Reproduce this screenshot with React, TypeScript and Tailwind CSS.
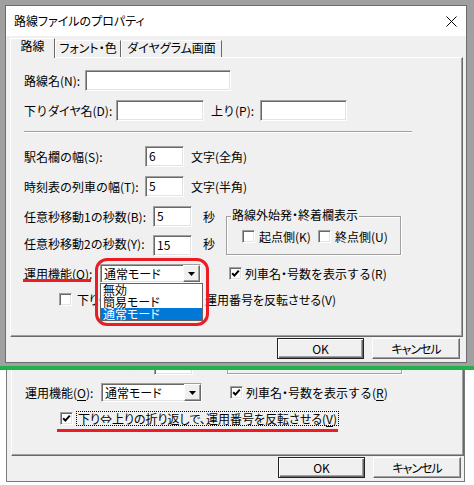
import React from "react";

const SUNKEN =
  "border border-t-[#a0a0a0] border-l-[#a0a0a0] border-r-white border-b-white shadow-[inset_1px_1px_0_#696969,inset_-1px_-1px_0_#e3e3e3] bg-white";
const RAISED =
  "border border-t-white border-l-white border-r-[#696969] border-b-[#696969] shadow-[inset_-1px_-1px_0_#a0a0a0] bg-[#f0f0f0]";

function K({ children }: { children: React.ReactNode }) {
  return <span className="[font-feature-settings:'palt']">{children}</span>;
}

function Check({ checked, className = "" }: { checked?: boolean; className?: string }) {
  return (
    <div className={`w-[13px] h-[13px] shrink-0 flex items-center justify-center ${SUNKEN} ${className}`}>
      {checked && (
        <svg width="9" height="9" viewBox="0 0 9 9">
          <polyline points="1.2,4.2 3.4,6.6 7.8,1.6" fill="none" stroke="#000" strokeWidth="2" />
        </svg>
      )}
    </div>
  );
}

function Field({ w, value }: { w: string; value?: string }) {
  return (
    <div className={`${w} h-[21px] shrink-0 pl-[3px] pt-[2px] leading-[14px] ${SUNKEN}`}>{value}</div>
  );
}

function Body({ bottom }: { bottom?: boolean }) {
  const u = bottom ? "underline underline-offset-[2px]" : "";
  return (
    <div className="w-[460px] h-[326px] shrink-0 bg-[#f0f0f0] pl-[4px] pr-[3px] pt-[2px] flex flex-col">
      {/* tabs */}
      <div className="flex items-end h-[19px] shrink-0">
        <div className="relative z-10 h-[20px] -mb-[1px] w-[45px] shrink-0 border-l border-t border-r border-l-white border-t-white border-r-[#696969] bg-[#f0f0f0] flex justify-center leading-[14px]">
          路線
        </div>
        <div className="h-[17px] w-[66px] shrink-0 border-l border-t border-r border-l-white border-t-white border-r-[#696969] flex justify-center leading-[14px] whitespace-nowrap">
          <K>フォント・色</K>
        </div>
        <div className="h-[17px] w-[101px] shrink-0 border-l border-t border-r border-l-white border-t-white border-r-[#696969] flex justify-center leading-[14px] whitespace-nowrap">
          <K>ダイヤグラム</K>画面
        </div>
      </div>

      {/* panel */}
      <div className="h-[280px] shrink-0 border border-t-white border-l-white border-r-[#696969] border-b-[#696969] shadow-[inset_-1px_-1px_0_#a0a0a0] pl-[13px] pt-[12px] leading-[14px] whitespace-nowrap">
        <div className="flex items-center h-[21px]">
          <span className="w-[61px] shrink-0">路線名(N):</span>
          <Field w="w-[146px]" />
        </div>
        <div className="flex items-center h-[21px] mt-[9px]">
          <span className="w-[92px] shrink-0">
            下り<K>ダイヤ</K>名(D):
          </span>
          <Field w="w-[88px]" />
          <span className="ml-[7px] w-[49px] shrink-0">上り(P):</span>
          <Field w="w-[87px]" />
        </div>
        <div className="mt-[10px] w-[388px] h-[2px] border-t border-t-[#a0a0a0] border-b border-b-white" />
        <div className="flex items-center h-[21px] mt-[13px]">
          <span className="w-[121px] shrink-0">駅名欄の幅(S):</span>
          <Field w="w-[39px]" value="6" />
          <span className="ml-[7px]">文字(全角)</span>
        </div>
        <div className="flex items-center h-[21px] mt-[9px]">
          <span className="w-[121px] shrink-0">時刻表の列車の幅(T):</span>
          <Field w="w-[39px]" value="5" />
          <span className="ml-[7px]">文字(半角)</span>
        </div>
        <div className="flex mt-[9px]">
          <div className="w-[202px] shrink-0">
            <div className="flex items-center h-[21px]">
              <span className="w-[129px] shrink-0">任意秒移動1の秒数(B):</span>
              <Field w="w-[39px]" value="5" />
              <span className="ml-[11px]">秒</span>
            </div>
            <div className="flex items-center h-[21px] mt-[8px]">
              <span className="w-[129px] shrink-0 mb-[4px]">任意秒移動2の秒数(Y):</span>
              <Field w="w-[39px]" value="15" />
              <span className="ml-[11px] mb-[3px]">秒</span>
            </div>
          </div>
          <div className="mt-[10px] w-[175px] h-[39px] shrink-0 border border-[#a0a0a0] shadow-[inset_1px_1px_0_#fff,1px_1px_0_#fff]">
            <div className="-mt-[9px] ml-[4px] w-fit px-[1px] bg-[#f0f0f0] leading-[13px]">
              路線外始発<K>・</K>終着欄表示
            </div>
            <div className="flex items-center h-[13px] mt-[9px] pl-[15px]">
              <div className="flex items-center w-[76px] shrink-0">
                <Check />
                <span className="ml-[4px] leading-[13px]">起点側(K)</span>
              </div>
              <Check />
              <span className="ml-[4px] leading-[13px]">終点側(U)</span>
            </div>
          </div>
        </div>

        <div className="flex items-center h-[19px] mt-[8px]">
          <span className="w-[76px] shrink-0">
            運用機能(<span className={u}>O</span>):
          </span>
          <div className="relative w-[101px] h-[19px] shrink-0">
            <div className={`w-full h-full flex items-center pl-[3px] ${SUNKEN}`}>
              <span className="flex-1 leading-[14px]">
                通常<K>モード</K>
              </span>
              <div className={`w-[17px] h-[17px] shrink-0 flex items-center justify-center ${RAISED}`}>
                <svg width="7" height="4" viewBox="0 0 7 4">
                  <polygon points="0,0 7,0 3.5,4" fill="#000" />
                </svg>
              </div>
            </div>
            {!bottom && (
              <div className="absolute left-0 top-full w-[103px] border border-[#646464] bg-white z-20">
                <div className="h-[12px] leading-[12px] pl-[2px]">無効</div>
                <div className="h-[12px] leading-[12px] pl-[2px]">
                  簡易<K>モード</K>
                </div>
                <div className="h-[12px] leading-[12px] pl-[2px] bg-[#0078d7] text-white">
                  通常<K>モード</K>
                </div>
              </div>
            )}
          </div>
          <Check checked className="ml-[28px]" />
          <span className="ml-[3px]">
            列車名<K>・</K>号数を表示する(<span className={u}>R</span>)
          </span>
        </div>

        <div className="flex items-center h-[13px] mt-[10px] pl-[35px]">
          <Check checked={bottom} />
          <span
            className={`ml-[3px] px-[1px] leading-[13px] border [font-feature-settings:'palt'] ${
              bottom ? "border-dotted border-black" : "border-transparent"
            }`}
          >
            下り⇔上りの折り返しで、運用番号を反転させる(<span className={u}>V</span>)
          </span>
        </div>
      </div>

      {/* buttons */}
      <div className="flex justify-end gap-[8px] pr-[3px] mt-[1px] shrink-0">
        <div className="w-[87px] h-[21px] border border-[#222] shadow-[inset_1px_1px_0_#fff,inset_-1px_-1px_0_#696969,inset_-2px_-2px_0_#a0a0a0] bg-[#f0f0f0] flex items-center justify-center leading-[14px]">
          OK
        </div>
        <div className={`w-[88px] h-[21px] flex items-center justify-center leading-[14px] ${RAISED}`}>
          <span className="[font-feature-settings:'palt'] tracking-[-1px]">キャンセル</span>
        </div>
      </div>
    </div>
  );
}

export default function App() {
  return (
    <div className="relative w-[474px] h-[485px] overflow-hidden bg-white text-black text-[12px] font-['Noto_Sans_CJK_JP',sans-serif]">
      <div className="h-[366px] bg-[#a0a0a0] pt-[5px] pl-[5px]">
        <div className="w-[462px] h-[358px] border border-[#6d6d6d] flex flex-col">
          <div className="h-[30px] shrink-0 bg-white flex items-center justify-between pl-[8px] pr-[9px]">
            <span className="leading-[14px] [font-feature-settings:'palt']">路線ファイルのプロパティ</span>
            <svg width="11" height="11" viewBox="0 0 11 11">
              <path d="M0.5 0.5 L10.5 10.5 M10.5 0.5 L0.5 10.5" stroke="#000" strokeWidth="1" />
            </svg>
          </div>
          <Body />
        </div>
      </div>
      <div className="h-[4px] bg-[#22b14c]" />
      <div className="h-[115px] bg-white pl-[6px]">
        <div className="w-[459px] h-[112px] border-l border-r border-b border-[#7a7a7a] overflow-hidden">
          <div className="-mt-[215px]">
            <Body bottom />
          </div>
        </div>
      </div>

      {/* annotations */}
      <div className="absolute left-[95px] top-[258px] w-[114px] h-[68px] rounded-[12px] border-[3px] border-[#ed1c24]" />
      <div className="absolute left-[23px] top-[279px] w-[68px] h-[3px] bg-[#ed1c24]" />
      <div className="absolute left-[57px] top-[429px] w-[281px] h-[3px] bg-[#ed1c24]" />
    </div>
  );
}
